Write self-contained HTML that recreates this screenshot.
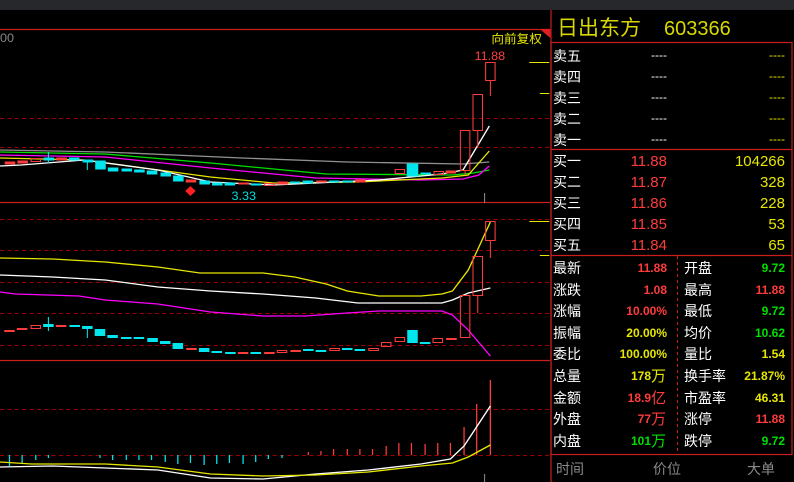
<!DOCTYPE html>
<html><head><meta charset="utf-8"><style>
html,body{margin:0;padding:0;background:#000;width:794px;height:482px;overflow:hidden;font-family:"Liberation Sans","Noto Sans CJK SC",sans-serif}
svg{position:absolute;left:0;top:0}
</style></head><body>
<svg width="794" height="482" viewBox="0 0 794 482" xmlns="http://www.w3.org/2000/svg" font-family="Liberation Sans, Noto Sans CJK SC, sans-serif">
<rect x="0" y="0" width="794" height="10" fill="#26282c"/>
<rect x="0" y="10" width="794" height="472" fill="#000"/>
<g stroke="#c81e1e" stroke-width="1.2">
<line x1="0" y1="29.5" x2="550" y2="29.5"/>
<line x1="0" y1="202.5" x2="550" y2="202.5"/>
<line x1="0" y1="360.5" x2="550" y2="360.5"/>
<line x1="551" y1="10" x2="551" y2="482"/>
</g>
<g transform="scale(1.0523,1)">
<g stroke="#9a0000" stroke-width="1" stroke-dasharray="4,3">
<line x1="0" y1="118.5" x2="522" y2="118.5"/><line x1="0" y1="147.5" x2="522" y2="147.5"/>
<line x1="0" y1="219.5" x2="522" y2="219.5"/><line x1="0" y1="250.5" x2="522" y2="250.5"/>
<line x1="0" y1="282.5" x2="522" y2="282.5"/><line x1="0" y1="313.5" x2="522" y2="313.5"/>
<line x1="0" y1="345.5" x2="522" y2="345.5"/>
<line x1="0" y1="409.5" x2="522" y2="409.5"/><line x1="0" y1="455.5" x2="522" y2="455.5"/>
</g>
<text x="0" y="42" fill="#888" font-size="12">00</text>
<text x="467" y="43" fill="#e6e600" font-size="12">向前复权</text>
<polygon points="513,29 523,29 523,38" fill="#e02020"/>
<line x1="503" y1="62.5" x2="522" y2="62.5" stroke="#e6e600"/>
<line x1="513" y1="93.5" x2="522" y2="93.5" stroke="#e6e600"/>
<line x1="503" y1="221.5" x2="522" y2="221.5" stroke="#e6e600"/>
<line x1="513" y1="255.5" x2="522" y2="255.5" stroke="#e6e600"/>
<text x="451" y="60" fill="#ff4040" font-size="12">11.88</text>
<text x="220" y="200" fill="#00dede" font-size="12">3.33</text>
<polygon points="181,186 186,191 181,196 176,191" fill="#ff2020"/>
<line x1="460.5" y1="193" x2="460.5" y2="203" stroke="#888"/>
<line x1="460.5" y1="474" x2="460.5" y2="482" stroke="#888"/>
<g fill="none" stroke-width="1.3">
<polyline stroke="#909090" points="0,150 100,152 230,158 330,162 440,164 465,162"/>
<polyline stroke="#00e000" points="0,152 100,154 200,163 310,174 430,175 450,173 465,170"/>
<polyline stroke="#ff00ff" points="0,155 100,157 200,168 300,178 400,180 440,179 455,175 465,166"/>
<polyline stroke="#e6e600" points="0,158 80,160 200,177 260,183 340,182 420,178 445,175 465,151"/>
<polyline stroke="#ffffff" points="0,166 20,165 80,160 150,170 200,182 260,185 360,180 420,174 440,170 465,126"/>
</g>
<g stroke-width="1">
<g fill="#ff3c3c" stroke="#ff3c3c">
<rect x="5" y="162" width="9" height="2"/><rect x="17" y="161" width="9" height="2"/><rect x="54" y="158" width="9" height="2"/>
<rect x="177" y="180" width="9" height="2"/><rect x="227" y="183" width="9" height="1"/><rect x="264" y="182" width="9" height="2"/>
<rect x="301" y="181" width="9" height="1"/><rect x="338" y="180" width="9" height="2"/><rect x="424" y="171" width="9" height="2"/>
</g>
<g fill="none" stroke="#ff3c3c">
<rect x="29.5" y="158.5" width="9" height="3"/><rect x="251.5" y="183.5" width="9" height="2"/>
<rect x="375.5" y="169.5" width="9" height="4"/><rect x="412.5" y="171.5" width="9" height="3"/>
<rect x="437.5" y="130.5" width="9" height="40"/><line x1="442" y1="171" x2="442" y2="175"/>
<rect x="449.5" y="94.5" width="9" height="36"/><line x1="454" y1="131" x2="454" y2="148"/>
<rect x="461.5" y="62.5" width="9" height="18"/><line x1="466" y1="81" x2="466" y2="96"/>
</g>
<g fill="#00e5ee" stroke="#00e5ee">
<rect x="42" y="158" width="9" height="2"/><line x1="46" y1="152" x2="46" y2="163"/>
<rect x="66" y="158" width="9" height="2"/><rect x="79" y="160" width="9" height="2"/><line x1="83" y1="160" x2="83" y2="170"/>
<rect x="91" y="161" width="9" height="8"/><rect x="103" y="168" width="9" height="3"/><rect x="116" y="169" width="9" height="2"/>
<rect x="128" y="170" width="9" height="2"/><rect x="140" y="171" width="9" height="3"/><rect x="153" y="173" width="9" height="3"/>
<rect x="165" y="176" width="9" height="5"/><rect x="190" y="181" width="9" height="3"/><rect x="202" y="183" width="9" height="2"/>
<rect x="214" y="183" width="9" height="2"/><rect x="239" y="184" width="9" height="1"/><rect x="276" y="182" width="9" height="1"/>
<rect x="288" y="181" width="9" height="2"/><rect x="313" y="181" width="9" height="1"/><rect x="326" y="181" width="9" height="1"/>
<rect x="387" y="164" width="10" height="12"/><rect x="400" y="173" width="9" height="1"/>
</g>
</g>
<g fill="none" stroke-width="1.3">
<polyline stroke="#e6e600" points="0,258 50,259 100,262 150,267 190,273 250,273 280,277 310,284 330,291 360,296 400,296 420,294 430,291 445,270 466,222"/>
<polyline stroke="#ffffff" points="0,275 50,277 100,280 150,287 200,291 250,294 300,298 340,303 420,303 430,300 445,293 466,288"/>
<polyline stroke="#ff00ff" points="0,292 15,294 75,296 100,300 150,304 200,312 250,316 290,316 330,313 360,311 420,311 430,315 445,330 466,356"/>
</g>
<g>
<g fill="#ff3c3c">
<rect x="4" y="330" width="10" height="2"/><rect x="16" y="328" width="10" height="2"/><rect x="53" y="325" width="10" height="2"/>
<rect x="177" y="348" width="10" height="2"/><rect x="226" y="352" width="10" height="2"/><rect x="251" y="352" width="10" height="2"/>
<rect x="276" y="350" width="10" height="2"/><rect x="424" y="338" width="10" height="2"/>
</g>
<g fill="none" stroke="#ff3c3c">
<rect x="29.5" y="325.5" width="9" height="3"/><rect x="263.5" y="350.5" width="9" height="2"/><rect x="313.5" y="348.5" width="9" height="2"/>
<rect x="350.5" y="348.5" width="9" height="2"/><rect x="362.5" y="342.5" width="9" height="4"/><rect x="375.5" y="337.5" width="9" height="4"/>
<rect x="411.5" y="338.5" width="9" height="4"/>
<rect x="437.5" y="295.5" width="9" height="42"/>
<rect x="449.5" y="256.5" width="9" height="39"/><line x1="454" y1="296" x2="454" y2="313"/>
<rect x="461.5" y="221.5" width="9" height="19"/><line x1="466" y1="241" x2="466" y2="258"/>
</g>
<g fill="#00e5ee">
<rect x="41" y="324" width="10" height="3"/><rect x="45.5" y="317" width="1" height="14"/>
<rect x="66" y="325" width="10" height="2"/><rect x="78" y="326" width="10" height="3"/><rect x="82.5" y="326" width="1" height="12"/>
<rect x="90" y="329" width="10" height="7"/><rect x="102" y="335" width="10" height="3"/><rect x="115" y="337" width="10" height="2"/>
<rect x="127" y="337" width="10" height="2"/><rect x="140" y="338" width="10" height="4"/><rect x="152" y="341" width="10" height="3"/>
<rect x="164" y="343" width="10" height="6"/><rect x="189" y="348" width="10" height="4"/><rect x="201" y="351" width="10" height="2"/>
<rect x="214" y="352" width="10" height="2"/><rect x="238" y="352" width="10" height="2"/><rect x="288" y="349" width="10" height="2"/>
<rect x="300" y="350" width="10" height="2"/><rect x="325" y="348" width="10" height="2"/><rect x="337" y="349" width="10" height="2"/>
<rect x="387" y="330" width="10" height="13"/><rect x="399" y="342" width="10" height="2"/>
</g>
</g>
<g stroke="#00e5ee" stroke-width="1.2">
<line x1="9" y1="455" x2="9" y2="466"/><line x1="21" y1="455" x2="21" y2="463"/><line x1="34" y1="455" x2="34" y2="460"/>
<line x1="46" y1="455" x2="46" y2="458"/><line x1="95" y1="455" x2="95" y2="458"/><line x1="107" y1="455" x2="107" y2="460"/>
<line x1="120" y1="455" x2="120" y2="460"/><line x1="132" y1="455" x2="132" y2="460"/><line x1="144" y1="455" x2="144" y2="460"/>
<line x1="157" y1="455" x2="157" y2="462"/><line x1="169" y1="455" x2="169" y2="464"/><line x1="181" y1="455" x2="181" y2="463"/>
<line x1="194" y1="455" x2="194" y2="465"/><line x1="206" y1="455" x2="206" y2="464"/><line x1="218" y1="455" x2="218" y2="463"/>
<line x1="231" y1="455" x2="231" y2="464"/><line x1="243" y1="455" x2="243" y2="462"/><line x1="255" y1="455" x2="255" y2="459"/>
<line x1="268" y1="455" x2="268" y2="458"/>
</g>
<g stroke="#ff3c3c" stroke-width="1.2">
<line x1="293" y1="455" x2="293" y2="452"/><line x1="305" y1="455" x2="305" y2="451"/><line x1="317" y1="455" x2="317" y2="449"/>
<line x1="330" y1="455" x2="330" y2="449"/><line x1="342" y1="455" x2="342" y2="449"/><line x1="354" y1="455" x2="354" y2="449"/>
<line x1="367" y1="455" x2="367" y2="446"/><line x1="379" y1="455" x2="379" y2="443"/><line x1="391" y1="455" x2="391" y2="443"/>
<line x1="404" y1="455" x2="404" y2="444"/><line x1="416" y1="455" x2="416" y2="443"/><line x1="428" y1="455" x2="428" y2="443"/>
<line x1="441" y1="455" x2="441" y2="427"/><line x1="453" y1="455" x2="453" y2="404"/><line x1="466" y1="455" x2="466" y2="380"/>
</g>
<g fill="none" stroke-width="1.3">
<polyline stroke="#ffffff" points="0,467 50,466 100,468 150,470 200,478 250,479 300,474 350,470 400,464 428,459 441,446 466,406"/>
<polyline stroke="#e6e600" points="0,462 30,464 100,464 150,467 200,474 250,476 300,475 350,472 400,466 430,463 445,457 466,445"/>
</g>
</g>
<text x="557" y="35" fill="#d8d800" font-size="21">日出东方</text>
<text x="664" y="35" fill="#d8d800" font-size="20">603366</text>
<g fill="none" stroke="#c81e1e" stroke-width="1.2">
<rect x="551" y="42.5" width="241" height="412"/>
<line x1="551" y1="149.5" x2="792" y2="149.5"/>
<line x1="551" y1="255.5" x2="792" y2="255.5"/>
</g>
<line x1="677.5" y1="256" x2="677.5" y2="454" stroke="#c81e1e" stroke-dasharray="3,3"/>
<g font-size="14" fill="#fff">
<text x="553" y="61">卖五</text><text x="553" y="82">卖四</text><text x="553" y="103">卖三</text><text x="553" y="124">卖二</text><text x="553" y="145">卖一</text>
<text x="553" y="166">买一</text><text x="553" y="187">买二</text><text x="553" y="208">买三</text><text x="553" y="229">买四</text><text x="553" y="250">买五</text>
</g>
<g font-size="12" text-anchor="end">
<g fill="#fff"><text x="667" y="59">----</text><text x="667" y="80">----</text><text x="667" y="101">----</text><text x="667" y="122">----</text><text x="667" y="143">----</text></g>
<g fill="#e6e600"><text x="785" y="59">----</text><text x="785" y="80">----</text><text x="785" y="101">----</text><text x="785" y="122">----</text><text x="785" y="143">----</text></g>
</g>
<g font-size="15" text-anchor="end">
<g fill="#ff3c3c"><text x="667" y="166">11.88</text><text x="667" y="187">11.87</text><text x="667" y="208">11.86</text><text x="667" y="229">11.85</text><text x="667" y="250">11.84</text></g>
<g fill="#e6e600"><text x="785" y="166">104266</text><text x="785" y="187">328</text><text x="785" y="208">228</text><text x="785" y="229">53</text><text x="785" y="250">65</text></g>
</g>
<g font-size="14" fill="#fff">
<text x="553" y="273">最新</text><text x="553" y="295">涨跌</text><text x="553" y="316">涨幅</text><text x="553" y="338">振幅</text><text x="553" y="359">委比</text>
<text x="553" y="381">总量</text><text x="553" y="403">金额</text><text x="553" y="424">外盘</text><text x="553" y="446">内盘</text>
<text x="684" y="273">开盘</text><text x="684" y="295">最高</text><text x="684" y="316">最低</text><text x="684" y="338">均价</text><text x="684" y="359">量比</text>
<text x="684" y="381">换手率</text><text x="684" y="403">市盈率</text><text x="684" y="424">涨停</text><text x="684" y="446">跌停</text>
</g>
<g font-size="12" font-weight="bold" text-anchor="end">
<text x="667" y="272" fill="#ff3c3c">11.88</text><text x="667" y="294" fill="#ff3c3c">1.08</text><text x="667" y="315" fill="#ff3c3c">10.00%</text>
<text x="667" y="337" fill="#e6e600">20.00%</text><text x="667" y="358" fill="#e6e600">100.00%</text>
<text x="785" y="272" fill="#00e000">9.72</text><text x="785" y="294" fill="#ff3c3c">11.88</text><text x="785" y="315" fill="#00e000">9.72</text>
<text x="785" y="337" fill="#00e000">10.62</text><text x="785" y="358" fill="#e6e600">1.54</text><text x="785" y="380" fill="#e6e600">21.87%</text>
<text x="785" y="402" fill="#e6e600">46.31</text><text x="785" y="423" fill="#ff3c3c">11.88</text><text x="785" y="445" fill="#00e000">9.72</text>
<text x="651" y="380" fill="#e6e600">178</text><text x="651" y="402" fill="#ff3c3c">18.9</text><text x="651" y="423" fill="#ff3c3c">77</text><text x="651" y="445" fill="#00e000">101</text>
</g>
<g font-size="15">
<text x="651" y="381" fill="#e6e600">万</text><text x="651" y="403" fill="#ff3c3c">亿</text><text x="651" y="424" fill="#ff3c3c">万</text><text x="651" y="446" fill="#00e000">万</text>
</g>
<g font-size="14" fill="#8a8a8a">
<text x="556" y="474">时间</text><text x="653" y="474">价位</text><text x="747" y="474">大单</text>
</g>
</svg>
</body></html>
